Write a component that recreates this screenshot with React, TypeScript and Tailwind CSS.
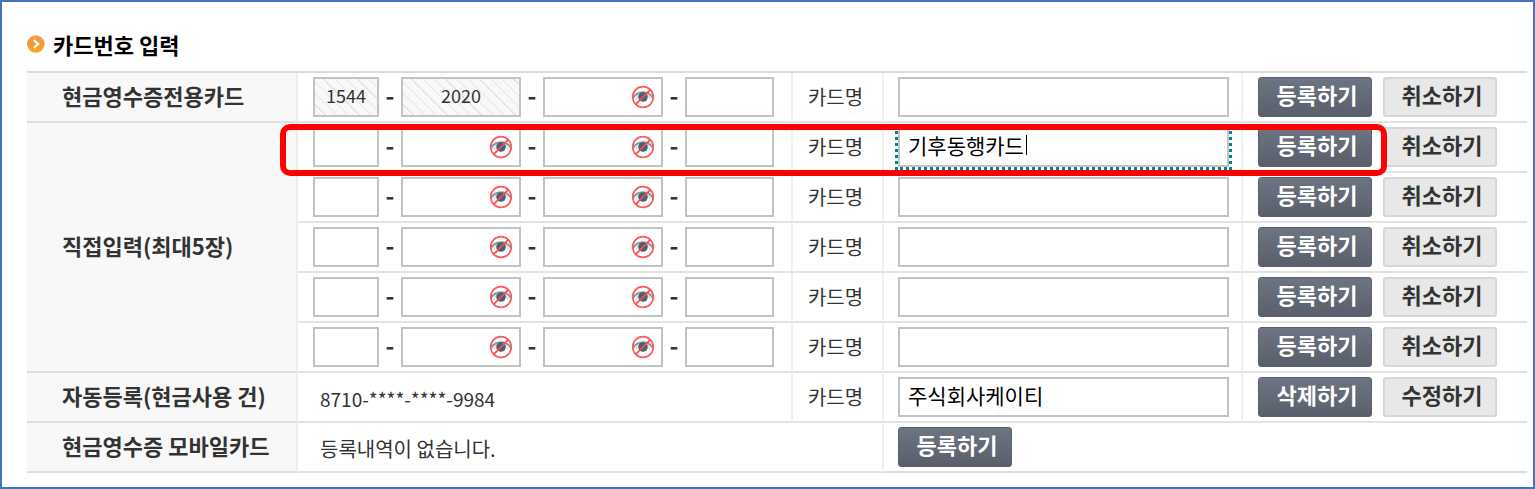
import { useState } from 'react';

type RowKind = 'issued' | 'direct' | 'auto';

interface CardRow {
    id: string;
    kind: RowKind;
    heading?: string;
    headingSpan?: number;
    name: string;
    active?: boolean;
    primary: string;
    secondary: string;
}

const rows: CardRow[] = [
    { id: 'issued', kind: 'issued', heading: '현금영수증전용카드', name: '', primary: '등록하기', secondary: '취소하기' },
    { id: 'direct1', kind: 'direct', heading: '직접입력(최대5장)', headingSpan: 5, name: '기후동행카드', active: true, primary: '등록하기', secondary: '취소하기' },
    { id: 'direct2', kind: 'direct', name: '', primary: '등록하기', secondary: '취소하기' },
    { id: 'direct3', kind: 'direct', name: '', primary: '등록하기', secondary: '취소하기' },
    { id: 'direct4', kind: 'direct', name: '', primary: '등록하기', secondary: '취소하기' },
    { id: 'direct5', kind: 'direct', name: '', primary: '등록하기', secondary: '취소하기' },
    { id: 'auto', kind: 'auto', heading: '자동등록(현금사용 건)', name: '주식회사케이티', primary: '삭제하기', secondary: '수정하기' },
];

const rowHeading = 'border-b-2 border-r-2 border-b-[#dfdfdf] border-r-[#eeeeee] bg-[#f8f8f8] pb-1 pl-[35px] text-left text-[22px] leading-7 font-bold whitespace-nowrap';
const cell = 'h-[50px] border-b-2 border-r-2 border-b-[#e3e3e3] border-r-[#f0f0f0]';
const box = 'h-10 border-2 border-[#c3c3c3] outline-none';

function BulletIcon() {
    return (
        <svg className="h-[18px] w-[18px]" viewBox="0 0 18 18" aria-hidden="true">
            <defs>
                <linearGradient id="bullet" x1="0" y1="0" x2="0" y2="1">
                    <stop offset="0" stopColor="#f0a058" />
                    <stop offset="0.5" stopColor="#f5962c" />
                    <stop offset="1" stopColor="#ffaa2a" />
                </linearGradient>
            </defs>
            <circle cx="8.800" cy="9" r="8.700" fill="url(#bullet)" />
            <path d="M6.800 5l4.200 4-4.200 4" fill="none" stroke="#fff" strokeWidth="2.400" />
        </svg>
    );
}

function HiddenEyeIcon() {
    return (
        <svg className="h-6 w-6" viewBox="0 0 24 24" fill="none" aria-hidden="true">
            <path d="M2 13C4.600 8.800 8 7.200 12 7.200s7.400 1.600 10 5.800" stroke="#8795a2" strokeWidth="2" />
            <path d="M5 14.500C6 11.500 7.500 9.500 9 8.500" stroke="#c3cad1" strokeWidth="1" />
            <path d="M19 14.500C18 11.500 16.500 9.500 15 8.500" stroke="#c3cad1" strokeWidth="1" />
            <circle cx="12" cy="12" r="4.800" fill="#4a6073" />
            <circle cx="12" cy="12" r="10.300" stroke="#ff5a5a" strokeWidth="1.700" />
            <path d="M4.800 19.200L19.200 4.800" stroke="#ff4a4a" strokeWidth="1.700" />
        </svg>
    );
}

function Dash() {
    return <span className="mb-1 w-[22px] text-center text-2xl leading-7 font-bold">-</span>;
}

function MaskedInput({ label }: { label: string }) {
    return (
        <span className="relative flex">
            <input type="password" aria-label={label} className={`${box} w-[120px] bg-white pr-9 pl-2`} />
            <span className="pointer-events-none absolute top-2 right-2">
                <HiddenEyeIcon />
            </span>
        </span>
    );
}

function CardNumber({ row }: { row: CardRow }) {
    if (row.kind === 'auto') {
        return <div className="pt-1 pl-[22px] text-[19px] leading-7">8710-****-****-9984</div>;
    }

    const hatched = `${box} bg-[repeating-linear-gradient(45deg,#f8f8f8_0px,#f8f8f8_7px,#e3e3e3_7px,#e3e3e3_8px)] pb-1 text-center text-[18px]`;

    return (
        <div className="flex items-center pl-[15px]">
            {row.kind === 'issued' ? (
                <>
                    <input readOnly value="1544" aria-label="카드번호 1" className={`${hatched} w-[66px]`} />
                    <Dash />
                    <input readOnly value="2020" aria-label="카드번호 2" className={`${hatched} w-[120px]`} />
                </>
            ) : (
                <>
                    <input aria-label="카드번호 1" className={`${box} w-[66px] bg-white px-2 text-[18px]`} />
                    <Dash />
                    <MaskedInput label="카드번호 2" />
                </>
            )}
            <Dash />
            <MaskedInput label="카드번호 3" />
            <Dash />
            <input aria-label="카드번호 4" className={`${box} w-[89px] bg-white px-2 text-[18px]`} />
        </div>
    );
}

function NameInput({ row }: { row: CardRow }) {
    const [value, setValue] = useState(row.name);

    return (
        <div className="relative flex pr-3 pl-[14px]">
            <input
                id={`name-${row.id}`}
                value={value}
                onChange={(e) => setValue(e.target.value)}
                className={`h-10 w-full border-2 border-[#c3c3c3] bg-white px-2 pb-1 text-[21px] text-black ${row.active ? 'outline-3 outline-dotted outline-[#008390]' : 'outline-none'}`}
            />
            {row.active && value === row.name && (
                <span className="absolute top-2 left-[142px] h-5 w-px bg-black" />
            )}
        </div>
    );
}

function PrimaryButton({ children }: { children: string }) {
    return (
        <button
            type="button"
            className="h-10 w-[114px] rounded-[3px] border border-[#5b616d] bg-linear-to-b from-[#6d7582] to-[#595e6a] pb-1.5 pl-1 text-[22px] leading-7 font-bold text-white"
        >
            {children}
        </button>
    );
}

function SecondaryButton({ children }: { children: string }) {
    return (
        <button
            type="button"
            className="h-10 w-[114px] rounded-[3px] border-2 border-[#d6d6d6] bg-[#e8e8e8] pb-1.5 pl-1 text-[22px] leading-7 font-bold"
        >
            {children}
        </button>
    );
}

export default function App() {
    return (
        <main className="border-2 border-[#4472c4] bg-white pt-7 pr-[6px] pb-[14px] pl-[25px] font-['Noto_Sans_CJK_KR',sans-serif] text-[#333333]">
            <h1 className="mb-[13px] flex items-center gap-2 text-[22px] leading-7 font-bold text-black">
                <BulletIcon />
                카드번호 입력
            </h1>

            <div className="relative">
                <table className="w-full table-fixed border-separate border-spacing-0 border-t-2 border-[#dcdcdc]">
                    <colgroup>
                        <col className="w-[271px]" />
                        <col className="w-[495px]" />
                        <col className="w-[91px]" />
                        <col className="w-[359px]" />
                        <col />
                    </colgroup>
                    <tbody>
                        {rows.map((row) => (
                            <tr key={row.id}>
                                {row.heading && (
                                    <th scope="row" rowSpan={row.headingSpan} className={rowHeading}>
                                        {row.heading}
                                    </th>
                                )}
                                <td className={cell}>
                                    <CardNumber row={row} />
                                </td>
                                <td className={`${cell} pr-1 text-center text-[20px] leading-7`}>
                                    <label htmlFor={`name-${row.id}`}>카드명</label>
                                </td>
                                <td className={cell}>
                                    <NameInput row={row} />
                                </td>
                                <td className="border-b-2 border-[#e3e3e3]">
                                    <div className="flex gap-[11px] pl-[15px]">
                                        <PrimaryButton>{row.primary}</PrimaryButton>
                                        <SecondaryButton>{row.secondary}</SecondaryButton>
                                    </div>
                                </td>
                            </tr>
                        ))}
                        <tr>
                            <th scope="row" className={rowHeading}>현금영수증 모바일카드</th>
                            <td colSpan={2} className={cell}>
                                <div className="pt-1 pl-[22px] text-[20px] leading-7">등록내역이 없습니다.</div>
                            </td>
                            <td colSpan={2} className="border-b-2 border-[#dcdcdc]">
                                <div className="flex pl-[14px]">
                                    <PrimaryButton>등록하기</PrimaryButton>
                                </div>
                            </td>
                        </tr>
                    </tbody>
                </table>

                {/* highlight around the card being registered */}
                <div className="pointer-events-none absolute top-[53px] left-[253px] h-[52px] w-[1107px] rounded-[10px] border-6 border-[#ff0000]" />
            </div>
        </main>
    );
}
